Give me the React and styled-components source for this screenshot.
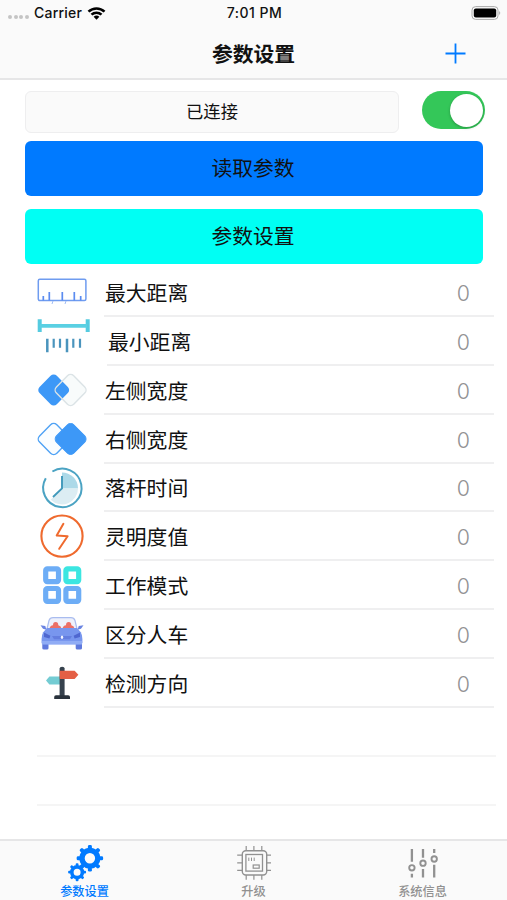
import React from 'react';
import styled, { createGlobalStyle } from 'styled-components';

const COLORS = {
  blue: '#007aff',
  cyan: '#00fff4',
  green: '#34c759',
  bar: '#fafafa',
  line: '#e6e6e7',
  faintLine: '#f5f5f5',
  gray: '#929294',
  text: '#111',
};

const CJK = `Inter, 'Noto Sans CJK SC', sans-serif`;

const GlobalStyle = createGlobalStyle`
  *, *::before, *::after {
    box-sizing: border-box;
  }
  body {
    margin: 0;
    background: white;
    color: ${COLORS.text};
    font-family: ${CJK};
  }
  button {
    margin: 0;
    padding: 0;
    border: none;
    background: none;
    color: inherit;
    font-family: inherit;
  }
  svg {
    display: block;
  }
`;

const Screen = styled.div`
  display: flex;
  flex-direction: column;
  width: 507px;
  height: 900px;
  overflow: hidden;
`;

const Header = styled.header`
  height: 80px;
  background: ${COLORS.bar};
  border-bottom: 2px solid ${COLORS.line};
`;

const StatusBar = styled.div`
  display: grid;
  grid-template-columns: 1fr auto 1fr;
  align-items: center;
  height: 26px;
  padding: 0 6px 0 8px;
  font-size: 14px;
  font-weight: 500;
  line-height: 26px;
`;

const Carrier = styled.div`
  display: flex;
  align-items: center;
  gap: 5px;
  letter-spacing: 0.2px;
`;

const Signal = styled.div`
  display: flex;
  gap: 1.7px;
  padding-top: 8px;
`;

const Dot = styled.span`
  width: 4px;
  height: 4px;
  border-radius: 50%;
  background: #c4c4c4;
`;

const Time = styled.span`
  letter-spacing: 0.5px;
`;

const BatterySlot = styled.div`
  justify-self: end;
`;

const NavBar = styled.div`
  display: grid;
  grid-template-columns: 1fr auto 1fr;
  align-items: center;
  height: 52px;
`;

const Title = styled.h1`
  grid-column: 2;
  margin: 0;
  padding-top: 3px;
  font-size: 20.8px;
  font-weight: 600;
  line-height: 52px;
`;

const AddButton = styled.button`
  justify-self: end;
  margin-right: 41px;
`;

const Controls = styled.section`
  display: flex;
  flex-direction: column;
  padding: 11px 22px 0 25px;
`;

const ConnectionRow = styled.div`
  display: flex;
  justify-content: space-between;
  height: 50px;
`;

const ConnectionState = styled.div`
  width: 374px;
  height: 42px;
  border: 1px solid #eeeeef;
  border-radius: 6px;
  background: ${COLORS.bar};
  font-size: 17.3px;
  line-height: 40px;
  text-align: center;
`;

const Toggle = styled.button`
  display: flex;
  justify-content: flex-end;
  width: 63px;
  height: 38px;
  padding: 2.5px;
  border-radius: 19px;
  background: ${COLORS.green};
`;

const Knob = styled.span`
  width: 33px;
  height: 33px;
  border-radius: 50%;
  background: white;
  box-shadow: 0 1px 3px rgba(0, 0, 0, 0.25);
`;

const ActionButton = styled.button`
  width: 458px;
  height: 55px;
  margin-bottom: 13px;
  padding-right: 2px;
  border-radius: 6px;
  background: ${(props) => props.$color};
  font-size: 20.8px;
  line-height: 56px;
`;

const List = styled.ul`
  flex: 1;
  margin: -9px 0 0;
  padding: 0;
  list-style: none;
`;

const Row = styled.li`
  display: flex;
  height: 48.88px;
  padding: 0 13px 0 35px;
`;

const RowBody = styled.div`
  display: flex;
  flex: 1;
  justify-content: space-between;
  align-items: center;
  margin-left: ${(props) => (props.$indent ? 12 : 9)}px;
  padding: 4px 24px 0 1px;
  border-bottom: 2px solid #efeff0;
`;

const Label = styled.span`
  font-size: 20.8px;
  line-height: 43px;
`;

const Value = styled.span`
  color: ${COLORS.gray};
  font-size: 21.4px;
  font-weight: 300;
  line-height: 43px;
`;

const EmptyRow = styled.li`
  height: 48.88px;
  margin: 0 11px 0 37px;
  border-bottom: 2px solid ${COLORS.faintLine};
`;

const TabBar = styled.nav`
  display: grid;
  grid-template-columns: repeat(3, 1fr);
  height: 61px;
  border-top: 2px solid ${COLORS.line};
  background: ${COLORS.bar};
`;

const Tab = styled.button`
  display: flex;
  flex-direction: column;
  align-items: center;
  padding-top: 4px;
  color: ${(props) => (props.$active ? COLORS.blue : '#919191')};
  font-size: 12.2px;
  font-weight: 500;
  line-height: 20px;
`;

const ItemIcon = ({ children }) => (
  <svg width="60" height="49" viewBox="0 0 60 49" fill="none">
    {children}
  </svg>
);

const RulerIcon = () => (
  <ItemIcon>
    <rect x="3.3" y="11.2" width="47.6" height="21.4" rx="1.5" stroke="#6f9cf0" strokeWidth="1.5" />
    <path d="M8.3 28V32.6M14.3 24V32.6M27.3 24V32.6M39.3 24V32.6M45.7 28V32.6" stroke="#5b8cf0" strokeWidth="1.7" />
    <path d="M18 33l-1 3M31 33l-1 3" stroke="#a0bdf5" strokeWidth="1" />
  </ItemIcon>
);

const GaugeIcon = () => (
  <ItemIcon>
    <path d="M4.7 2.3V15M52.7 2.3V15" stroke="#55cbe0" strokeWidth="4" />
    <path d="M5 8.8H52" stroke="#5ad0e3" strokeWidth="3.8" />
    <path d="M12.3 21.8V35.2M32 21.8V35.2" stroke="#4a94bd" strokeWidth="2.5" />
    <path d="M18.7 21.8V30.7M25 21.8V30.7M38.3 21.8V30.7M45 21.8V30.7" stroke="#4a94bd" strokeWidth="2.2" />
  </ItemIcon>
);

const Diamond = ({ cx, ...rest }) => (
  <rect x={cx - 12.2} y="11.8" width="24.4" height="24.4" rx="4.4" transform={`rotate(45 ${cx} 24)`} {...rest} />
);

const LeftWidthIcon = () => (
  <ItemIcon>
    <Diamond cx={35.6} fill="#f8fbfb" />
    <Diamond cx={18.7} fill="#3d98f7" />
    <Diamond cx={35.6} stroke="#dbe3e6" strokeWidth="1.4" />
  </ItemIcon>
);

const RightWidthIcon = () => (
  <ItemIcon>
    <Diamond cx={18.7} fill="#fafdff" stroke="#4fa2f5" strokeWidth="1.4" />
    <Diamond cx={35.6} fill="#3d98f7" stroke="#3d98f7" />
  </ItemIcon>
);

const ClockIcon = () => (
  <ItemIcon>
    <path d="M27 24.4V8.4A16 16 0 0 1 43 24.4Z" fill="#acd9e8" />
    <path d="M27 24.4H43A16 16 0 0 1 15.7 35.7Z" fill="#dcedf3" />
    <path d="M17.4 7.5A19.2 19.2 0 1 1 10.8 14.2" stroke="#4ba3c3" strokeWidth="2" />
    <path d="M27 12V24.4L18 33" stroke="#4099bb" strokeWidth="1.9" />
  </ItemIcon>
);

const BoltIcon = () => (
  <ItemIcon>
    <circle cx="27" cy="24.1" r="20.6" stroke="#ef6a2e" strokeWidth="2.1" />
    <path d="M28.4 11.8L21.7 23.6L32.6 24.2L24.2 36.8" stroke="#ef6a2e" strokeWidth="2" strokeLinecap="round" strokeLinejoin="round" />
  </ItemIcon>
);

const ModeIcon = () => (
  <ItemIcon>
    <g strokeWidth="5.2">
      <rect x="10.7" y="7.8" width="12.8" height="12.8" rx="1.6" stroke="#6dadf6" />
      <rect x="30.9" y="7.8" width="12.8" height="12.8" rx="1.6" stroke="#3ce6e1" />
      <rect x="10.7" y="27.5" width="12.8" height="12.8" rx="1.6" stroke="#6dadf6" />
      <rect x="30.9" y="27.5" width="12.8" height="12.8" rx="1.6" stroke="#6dadf6" />
    </g>
  </ItemIcon>
);

const CarIcon = () => (
  <ItemIcon>
    <path d="M11.5 21L14 10.5Q15 7.7 18 7.7H36Q39 7.7 40 10.5L42.5 21Z" fill="#eef1fb" stroke="#a9bcef" strokeWidth="1.2" />
    <path d="M14.5 18.5Q15 15.6 18 15.2Q18 12 20.7 12Q23.3 12 23.3 15.2Q26 15.6 26.5 18.5Z" fill="#ec7067" />
    <path d="M27.5 18.5Q28 15.6 31 15.2Q31 12 33.7 12Q36.3 12 36.3 15.2Q39 15.6 39.5 18.5Z" fill="#ec7067" />
    <path d="M7.3 32H13.5V38.2Q13.5 39.6 12 39.6H9Q7.3 39.6 7.3 38.2ZM40.7 32H47V38.2Q47 39.6 45.3 39.6H42.3Q40.7 39.6 40.7 38.2Z" fill="#5f79dd" />
    <path d="M5.5 15.2L10.3 16L11.4 19.8L8 18.8ZM48.5 15.2L43.7 16L42.6 19.8L46 18.8Z" fill="#6a84e2" />
    <path d="M12 18H42L45.8 22.2Q47.4 25 47.4 29V32.5Q47.4 34.2 45.6 34.2H8.4Q6.6 34.2 6.6 32.5V29Q6.6 25 8.2 22.2Z" fill="#7896ee" />
    <path d="M6.9 31H47.1V34.6H6.9Z" fill="#90acf5" />
    <path d="M9 22.6L15.4 25.8L14.4 28.5L9 27ZM45 22.6L38.6 25.8L39.6 28.5L45 27Z" fill="#4f67d0" />
    <path d="M17 26H37L35 29.3H19Z" fill="#647edf" />
    <ellipse cx="27" cy="27.3" rx="1.2" ry="1.8" fill="#f3f6ff" />
  </ItemIcon>
);

const SignIcon = () => (
  <ItemIcon>
    <path d="M14.4 17.4H26V25.4H14.4L11 21.4Z" fill="#74ccd3" />
    <path d="M24.6 38V9.4Q24.6 7.7 27.1 7.7Q29.6 7.7 29.6 9.4V38Z" fill="#36414d" />
    <path d="M24.7 11.7H39.6L43.4 15.8L39.6 20H24.7Z" fill="#e45f45" />
    <path d="M19.2 40V38Q19.2 36.2 21 36.2H33.2Q35 36.2 35 38V40Z" fill="#29323c" />
  </ItemIcon>
);

const TabIcon = ({ children }) => (
  <svg width="40" height="37" viewBox="0 0 40 37" fill="none" stroke="currentColor">
    {children}
  </svg>
);

const Gear = ({ cx, cy, radius, hole, tooth }) => (
  <g transform={`translate(${cx} ${cy})`}>
    <circle r={(radius + hole) / 2} strokeWidth={radius - hole} />
    {[0, 45, 90, 135, 180, 225, 270, 315].map((angle) => (
      <rect
        key={angle}
        x={-tooth / 2}
        y={-radius - tooth * 0.66}
        width={tooth}
        height={tooth}
        rx={tooth * 0.35}
        fill="currentColor"
        stroke="none"
        transform={`rotate(${angle})`}
      />
    ))}
  </g>
);

const GearsIcon = () => (
  <TabIcon>
    <Gear cx={24.9} cy={13.3} radius={10.6} hole={5.2} tooth={4} />
    <Gear cx={12.1} cy={27.2} radius={7.1} hole={3.5} tooth={2.8} />
  </TabIcon>
);

const ChipIcon = () => (
  <TabIcon>
    <rect x="8.3" y="5.8" width="24.4" height="24.2" rx="3.5" strokeWidth="1.4" />
    <rect x="11.9" y="9.5" width="16.6" height="16.6" strokeWidth="1.3" />
    <path d="M12.2 1V5.6M19.9 1V5.6M27.8 1V5.6M12.2 30V34.8M19.9 30V34.8M27.8 30V34.8M3.2 10.2H8M3.2 17.8H8M3.2 25.4H8M33 10.2H37M33 17.8H37M33 25.4H37" strokeWidth="1.2" />
    <path d="M14.8 12.6V16M17.5 12.6V16M20.2 12.6V16" strokeWidth="1" />
    <rect x="19.2" y="20" width="6" height="3.2" strokeWidth="1.2" />
  </TabIcon>
);

const SlidersIcon = () => (
  <TabIcon>
    <g strokeWidth="2.3">
      <path d="M8.9 4V16.8M8.9 28.8V32.4M20 4V12.8M20 24V32.4M31.2 4V8M31.2 19.8V32.4" />
      <circle cx="8.9" cy="22.8" r="2.7" strokeWidth="1.9" />
      <circle cx="20" cy="18.2" r="2.7" strokeWidth="1.9" />
      <circle cx="31.2" cy="14" r="2.7" strokeWidth="1.9" />
    </g>
  </TabIcon>
);

const WifiIcon = () => (
  <svg width="19" height="15" viewBox="0 0 19 15">
    <path d="M.6 4.7A13 13 0 0 1 18.4 4.7L16.6 6.5A10.4 10.4 0 0 0 2.4 6.5Z" />
    <path d="M3.6 7.7A8.7 8.7 0 0 1 15.4 7.7L13.6 9.5A6 6 0 0 0 5.4 9.5Z" />
    <path d="M6.6 10.7A4.3 4.3 0 0 1 12.4 10.7L9.5 13.7Z" />
  </svg>
);

const BatteryIcon = () => (
  <svg width="30" height="14" viewBox="0 0 30 14" fill="none">
    <rect x="1" y=".6" width="26" height="12.8" rx="3.6" stroke="#aaa" />
    <rect x="2.8" y="2.4" width="22.4" height="9.2" rx="2" fill="black" />
    <path d="M28.3 5Q30.1 7 28.3 9Z" fill="#999" />
  </svg>
);

const PlusIcon = () => (
  <svg width="21" height="21" viewBox="0 0 21 21">
    <path d="M10.5 .5V20.5M.5 10.5H20.5" stroke={COLORS.blue} strokeWidth="1.8" />
  </svg>
);

const ITEMS = [
  { label: '最大距离', Icon: RulerIcon },
  { label: '最小距离', Icon: GaugeIcon, indent: true },
  { label: '左侧宽度', Icon: LeftWidthIcon },
  { label: '右侧宽度', Icon: RightWidthIcon },
  { label: '落杆时间', Icon: ClockIcon },
  { label: '灵明度值', Icon: BoltIcon },
  { label: '工作模式', Icon: ModeIcon },
  { label: '区分人车', Icon: CarIcon },
  { label: '检测方向', Icon: SignIcon },
];

const TABS = [
  { label: '参数设置', Icon: GearsIcon, active: true },
  { label: '升级', Icon: ChipIcon },
  { label: '系统信息', Icon: SlidersIcon },
];

const App = () => (
  <Screen>
    <GlobalStyle />
    <Header>
      <StatusBar>
        <Carrier>
          <Signal>
            <Dot />
            <Dot />
            <Dot />
            <Dot />
          </Signal>
          Carrier
          <WifiIcon />
        </Carrier>
        <Time>7:01 PM</Time>
        <BatterySlot>
          <BatteryIcon />
        </BatterySlot>
      </StatusBar>
      <NavBar>
        <Title>参数设置</Title>
        <AddButton>
          <PlusIcon />
        </AddButton>
      </NavBar>
    </Header>

    <Controls>
      <ConnectionRow>
        <ConnectionState>已连接</ConnectionState>
        <Toggle role="switch" aria-checked="true">
          <Knob />
        </Toggle>
      </ConnectionRow>
      <ActionButton $color={COLORS.blue}>读取参数</ActionButton>
      <ActionButton $color={COLORS.cyan}>参数设置</ActionButton>
    </Controls>

    <List>
      {ITEMS.map(({ label, Icon, indent }) => (
        <Row key={label}>
          <Icon />
          <RowBody $indent={indent}>
            <Label>{label}</Label>
            <Value>0</Value>
          </RowBody>
        </Row>
      ))}
      <EmptyRow />
      <EmptyRow />
    </List>

    <TabBar>
      {TABS.map(({ label, Icon, active }) => (
        <Tab key={label} $active={active}>
          <Icon />
          {label}
        </Tab>
      ))}
    </TabBar>
  </Screen>
);

export default App;
